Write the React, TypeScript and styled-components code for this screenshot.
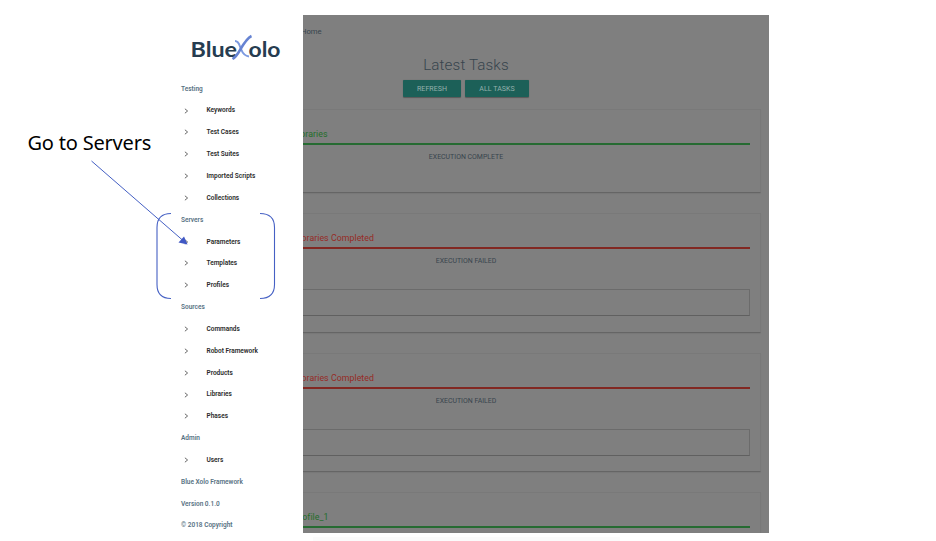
import React from 'react';
import styled, { createGlobalStyle } from 'styled-components';

const GlobalStyle = createGlobalStyle`
  * { box-sizing: border-box; }
  body { margin: 0; background: #fff; overflow: hidden; font-family: Roboto, "Liberation Sans", sans-serif; }
`;

const Page = styled.div`
  position: relative;
  display: grid;
  grid-template-columns: 170px 133px 466px;
  grid-template-rows: 518px 8px;
  padding-top: 15px;
  height: 541px;
  overflow: hidden;
`;

const Callout = styled.div`
  padding: 113px 0 0 27.5px;
  font: 400 20px/30px "Noto Sans", sans-serif;
  letter-spacing: -0.2px;
  color: #000;
  white-space: nowrap;
`;

const Sidebar = styled.nav`
  display: flex;
  flex-direction: column;
  padding: 17px 0 0 11px;
`;

const Logo = styled.svg`
  display: block;
  width: 100px;
  height: 32px;
  margin: 0 0 14.6px 8px;
  flex: none;
`;

const SideLabel = styled.div`
  height: 21.85px;
  flex: none;
  font-size: 6.5px;
  font-weight: 600;
  line-height: 21.85px;
  letter-spacing: 0;
  color: #587283;
  white-space: nowrap;
`;

const SideLink = styled(SideLabel)`
  display: flex;
  align-items: center;
  gap: 18px;
  padding-left: 3px;
  color: #2a2a2a;
`;

const Chevron = styled.svg`
  width: 4px;
  height: 6px;
  margin-right: 0.5px;
  position: relative;
  top: -0.8px;
  overflow: visible;
  fill: none;
  stroke: #606060;
  stroke-width: 0.95;
`;

const Main = styled.main`
  height: 518px;
  overflow: hidden;
  background: #7f7f7f;
  color: #37444d;
`;

const Crumb = styled.div`
  height: 32px;
  padding-top: 10px;
  margin-left: -2px;
  font-size: 7.7px;
  line-height: 13px;
`;

const Heading = styled.h1`
  width: 326px;
  height: 27px;
  margin: 6px 0 0;
  font-size: 15.2px;
  font-weight: 300;
  line-height: 24px;
  letter-spacing: 0.12px;
  text-align: center;
`;

const Actions = styled.div`
  display: flex;
  gap: 4px;
  margin-left: 100px;
`;

const Button = styled.button<{ $width: number }>`
  width: ${(p) => p.$width}px;
  height: 17px;
  padding: 0;
  border: 0;
  border-radius: 1px;
  background: #1c6058;
  color: #94b0ac;
  font: 400 7.05px/15px Roboto, sans-serif;
  letter-spacing: 0.04px;
  box-shadow: 0 0.5px 1px rgba(0, 0, 0, 0.3);
`;

const Cards = styled.div`
  display: flex;
  flex-direction: column;
  gap: 20px;
  padding: 12px 8px 0 0;
`;

const Card = styled.section<{ $height: number }>`
  height: ${(p) => p.$height}px;
  flex: none;
  padding-right: 10px;
  border: 1px solid #797979;
  border-left: 0;
  border-bottom-color: #656565;
  border-radius: 0 1px 1px 0;
  box-shadow: 0 1px 1px rgba(0, 0, 0, 0.06);
`;

const CardTitle = styled.div<{ $failed: boolean; $reach: number }>`
  display: flex;
  justify-content: flex-end;
  width: ${(p) => p.$reach}px;
  height: 33px;
  font-size: 8.8px;
  line-height: 48px;
  letter-spacing: 0.04px;
  white-space: nowrap;
  color: ${(p) => (p.$failed ? '#972b26' : '#236e2b')};
`;

const Rule = styled.div<{ $failed: boolean }>`
  height: 2px;
  background: ${(p) => (p.$failed ? '#822822' : '#266b32')};
`;

const Status = styled.div`
  width: 326px;
  padding-top: 6px;
  font-size: 6.95px;
  line-height: 13px;
  text-align: center;
`;

const Output = styled.div`
  height: 27px;
  margin-top: 21px;
  border: 1px solid #6b6b6b;
  border-left: 0;
  border-bottom-color: #606060;
`;

const BottomStrip = styled.div`
  grid-column: 3;
  width: 307px;
  height: 4px;
  margin: 4px 0 0 10px;
  background: #fbfbfb;
`;

const Annotation = styled.svg`
  position: absolute;
  left: 0;
  top: 0;
  width: 303px;
  height: 310px;
  pointer-events: none;
`;

const groups = [
  { name: 'Testing', items: ['Keywords', 'Test Cases', 'Test Suites', 'Imported Scripts', 'Collections'] },
  { name: 'Servers', items: ['Parameters', 'Templates', 'Profiles'] },
  { name: 'Sources', items: ['Commands', 'Robot Framework', 'Products', 'Libraries', 'Phases'] },
  { name: 'Admin', items: ['Users'] },
];

const tasks = [
  { title: 'Libraries', reach: 24.5, failed: false, height: 84, status: 'EXECUTION COMPLETE' },
  { title: 'Libraries Completed', reach: 71, failed: true, height: 120, status: 'EXECUTION FAILED' },
  { title: 'Libraries Completed', reach: 71, failed: true, height: 119, status: 'EXECUTION FAILED' },
  { title: 'Profile_1', reach: 25.5, failed: false, height: 84, status: 'EXECUTION COMPLETE' },
];

export default function App() {
  return (
    <>
      <GlobalStyle />
      <Page>
        <Callout>Go to Servers</Callout>
        <Sidebar>
          <Logo viewBox="0 0 100 32">
            <g fill="#263c50" fontFamily="Lato, sans-serif" fontWeight="700" fontSize="20.5">
              <text x="1.5" y="24.5" textLength="46.5" lengthAdjust="spacingAndGlyphs">Blue</text>
              <text x="59.5" y="24.5" textLength="32" lengthAdjust="spacingAndGlyphs">olo</text>
            </g>
            <path d="M46 9C50 9 50.500 13.500 52 17C53.500 21 56 24 60 24.500" fill="none" stroke="#7d9ae0" strokeWidth="2" />
            <path d="M62.500 4C58 6 54.500 12 51 18C48.500 22.500 47 25 43.500 27" fill="none" stroke="#6683d2" strokeWidth="2.5" />
          </Logo>
          {groups.map((group) => (
            <React.Fragment key={group.name}>
              <SideLabel>{group.name}</SideLabel>
              {group.items.map((item) => (
                <SideLink key={item}>
                  <Chevron viewBox="0 0 4 6"><path d="M0.9 0.8L3.6 3L0.9 5.2" /></Chevron>
                  {item}
                </SideLink>
              ))}
            </React.Fragment>
          ))}
          <SideLabel>Blue Xolo Framework</SideLabel>
          <SideLabel>Version 0.1.0</SideLabel>
          <SideLabel>© 2018 Copyright</SideLabel>
        </Sidebar>
        <Main>
          <Crumb>Home</Crumb>
          <Heading>Latest Tasks</Heading>
          <Actions>
            <Button $width={58}>REFRESH</Button>
            <Button $width={64}>ALL TASKS</Button>
          </Actions>
          <Cards>
            {tasks.map((task, i) => (
              <Card key={i} $height={task.height}>
                <CardTitle $failed={task.failed} $reach={task.reach}>{task.title}</CardTitle>
                <Rule $failed={task.failed} />
                <Status>{task.status}</Status>
                {task.failed && <Output />}
              </Card>
            ))}
          </Cards>
        </Main>
        <BottomStrip />
        <Annotation viewBox="0 0 303 310" fill="none" stroke="#4560c4">
          <path d="M91.5 161L183 240.5" strokeWidth="1" />
          <path d="M187.500 244.500L178.500 242.500L184 236.500Z" fill="#4058c4" stroke="none" />
          <path d="M171 213.500Q157 213.500 157 227.500V284.500Q157 298.500 171 298.500" strokeWidth="1.1" />
          <path d="M260 213.500Q274.500 213.500 274.500 227.500V284.500Q274.500 298.500 260 298.500" strokeWidth="1.1" />
        </Annotation>
      </Page>
    </>
  );
}
